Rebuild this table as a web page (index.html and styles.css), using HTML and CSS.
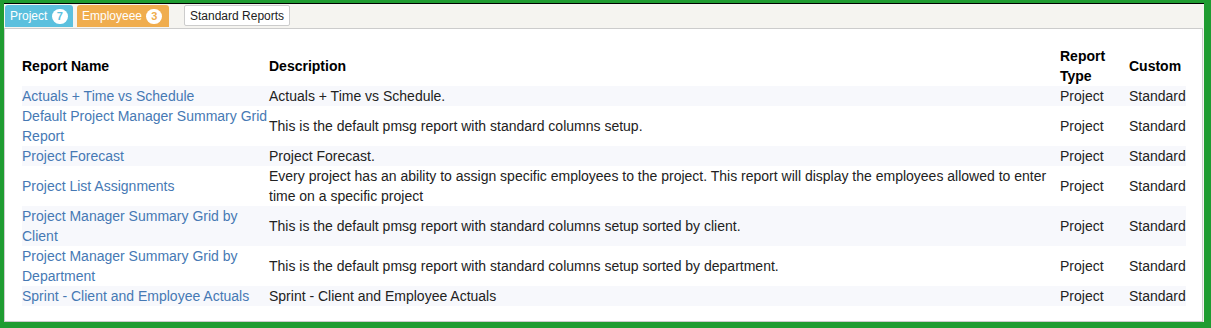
FILE: index.html
```html
<!DOCTYPE html>
<html>
<head>
<meta charset="utf-8">
<link rel="stylesheet" href="styles.css">
</head>
<body>
<div class="frame">
  <div class="tabbar">
    <span class="tab tab-info">Project <span class="badge">7</span></span>
    <span class="tab tab-warn">Employeee <span class="badge">3</span></span>
    <span class="tab tab-plain">Standard Reports</span>
  </div>
  <div class="panel">
    <table class="reports">
      <colgroup>
        <col class="c-name"><col class="c-desc"><col class="c-type"><col class="c-custom">
      </colgroup>
      <thead>
        <tr><th>Report Name</th><th>Description</th><th>Report Type</th><th>Custom</th></tr>
      </thead>
      <tbody>
        <tr><td><a href="#">Actuals + Time vs Schedule</a></td><td>Actuals + Time vs Schedule.</td><td>Project</td><td>Standard</td></tr>
        <tr><td><a href="#">Default Project Manager Summary Grid Report</a></td><td>This is the default pmsg report with standard columns setup.</td><td>Project</td><td>Standard</td></tr>
        <tr><td><a href="#">Project Forecast</a></td><td>Project Forecast.</td><td>Project</td><td>Standard</td></tr>
        <tr><td><a href="#">Project List Assignments</a></td><td>Every project has an ability to assign specific employees to the project. This report will display the employees allowed to enter time on a specific project</td><td>Project</td><td>Standard</td></tr>
        <tr><td><a href="#">Project Manager Summary Grid by Client</a></td><td>This is the default pmsg report with standard columns setup sorted by client.</td><td>Project</td><td>Standard</td></tr>
        <tr><td><a href="#">Project Manager Summary Grid by Department</a></td><td>This is the default pmsg report with standard columns setup sorted by department.</td><td>Project</td><td>Standard</td></tr>
        <tr><td><a href="#">Sprint - Client and Employee Actuals</a></td><td>Sprint - Client and Employee Actuals</td><td>Project</td><td>Standard</td></tr>
      </tbody>
    </table>
  </div>
</div>
</body>
</html>
```
FILE: styles.css
```css
html, body {
  margin: 0;
  padding: 0;
}
body {
  background: #1f9c31;
  font-family: "Liberation Sans", Arial, sans-serif;
  color: #222;
  width: 1211px;
  height: 328px;
  overflow: hidden;
}
.frame {
  margin: 3px 7px 0 4px;
  border-top: 1px solid #000;
  background: #f5f4f0;
  height: 318px;
  display: flex;
  flex-direction: column;
}
.tabbar {
  height: 24px;
  box-sizing: border-box;
  padding: 1px 0 0 1px;
  display: flex;
  align-items: flex-start;
  gap: 4px;
}
.tab {
  height: 22px;
  box-sizing: border-box;
  display: flex;
  align-items: center;
  padding: 0 5px;
  font-size: 12px;
  border-radius: 3px 3px 0 0;
  color: #fff;
  white-space: pre;
}
.tab-info {
  background: #5bc0de;
  width: 68px;
}
.tab-warn {
  background: #f0ad4e;
  width: 92px;
}
.tab-plain {
  background: #fff;
  color: #222;
  border: 1px solid #ccc;
  border-radius: 2px;
  margin-left: 11px;
  height: 21px;
  width: 106px;
}
.badge {
  display: inline-flex;
  align-items: center;
  justify-content: center;
  width: 16px;
  height: 15px;
  border-radius: 8px;
  background: #fff;
  font-size: 11px;
  font-weight: bold;
  margin-left: 1px;
}
.tab-info .badge { color: #5bc0de; }
.tab-warn .badge { color: #f0ad4e; }
.panel {
  flex: 1;
  background: #fff;
  border: 1px solid #ccc;
  margin-right: 1px;
  padding: 17px 17px 15px 17px;
}
.reports {
  border-collapse: collapse;
  table-layout: fixed;
  width: 1164px;
  font-size: 14px;
  line-height: 20px;
}
.c-name { width: 247px; }
.c-desc { width: 791px; }
.c-type { width: 69px; }
.c-custom { width: 57px; }
.reports th {
  text-align: left;
  font-weight: bold;
  color: #000;
  padding: 0;
  vertical-align: middle;
}
.reports td {
  padding: 0;
  vertical-align: middle;
}
.reports tbody tr:nth-child(odd) {
  background: #f7f8fc;
}
.reports a {
  color: #4679b4;
  text-decoration: none;
}
```
